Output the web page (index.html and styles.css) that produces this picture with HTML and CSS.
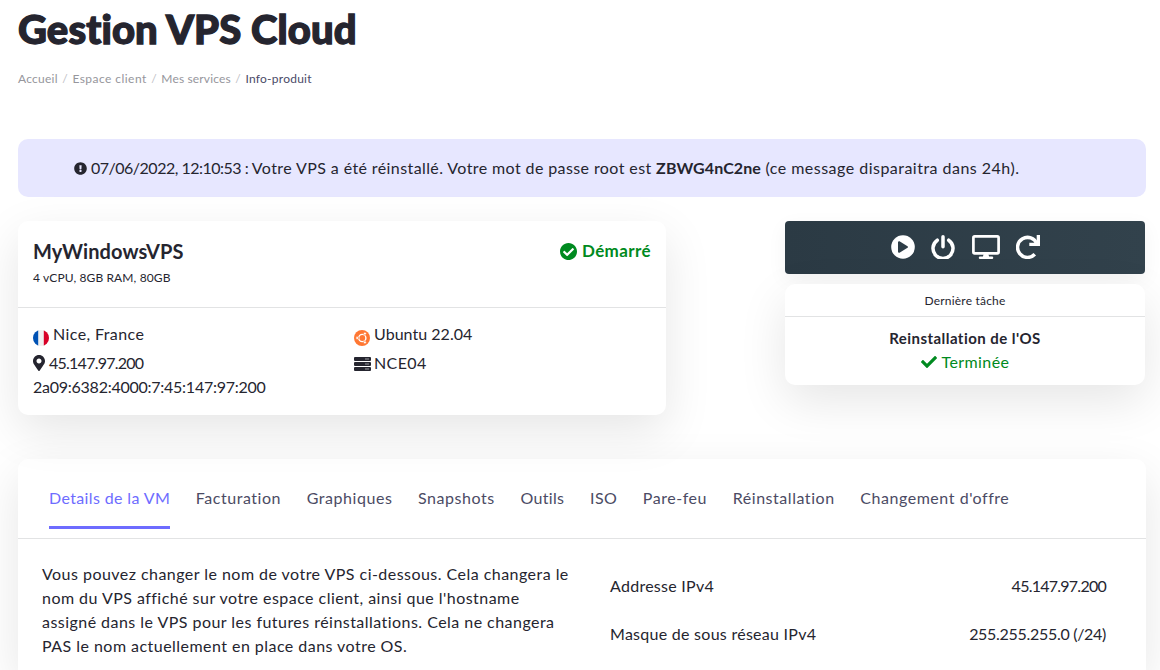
FILE: index.html
```html
<!DOCTYPE html>
<html lang="fr">
<head>
    <meta charset="UTF-8">
    <meta name="viewport" content="width=device-width, initial-scale=1.0">
    <title>Gestion VPS Cloud</title>
    <link rel="stylesheet" href="styles.css">
</head>
<body>
    <div class="container">
        <h1>Gestion VPS Cloud</h1>
        <nav class="breadcrumb">
            <a class="home">Accueil</a><i>/</i><a class="space">Espace client</a><i>/</i><a>Mes services</a><i>/</i><span class="current">Info-produit</span>
        </nav>

        <div class="alert">
            <svg class="icon-alert" viewBox="0 0 512 512"><path fill-rule="evenodd" d="M504 256c0 137-111 248-248 248S8 393 8 256C8 119 119 8 256 8s248 111 248 248zm-248 50c-25.400 0-46 20.600-46 46s20.600 46 46 46 46-20.600 46-46-20.600-46-46-46zm-43.700-165.300l7.400 136c.4 6.300 5.600 11.300 12 11.300h48.600c6.400 0 11.600-5 12-11.300l7.400-136c.4-6.900-5.100-12.700-12-12.700h-63.400c-6.900 0-12.400 5.800-12 12.700z"/></svg>
            <div><span class="date">07/06/2022, 12:10:53 : </span>Votre VPS a été réinstallé. Votre mot de passe root est <b>ZBWG4nC2ne</b> <span class="note">(ce message disparaitra dans 24h).</span></div>
        </div>

        <div class="summary">
            <div class="card vps">
                <div class="vps-header">
                    <div>
                        <h2>MyWindowsVPS</h2>
                        <div class="specs">4 vCPU, 8GB RAM, 80GB</div>
                    </div>
                    <div class="status">
                        <svg class="icon-status" viewBox="8 8 496 496"><path fill-rule="evenodd" d="M504 256c0 137-111 248-248 248S8 393 8 256 119 8 256 8s248 111 248 248zM227.300 387.300l184-184c6.200-6.200 6.200-16.400 0-22.600l-22.600-22.600c-6.200-6.200-16.400-6.200-22.600 0L216 308.100l-70.100-70c-6.200-6.200-16.400-6.200-22.600 0l-22.600 22.600c-6.200 6.200-6.200 16.400 0 22.600l104 104c6.200 6.200 16.400 6.200 22.600 0z"/></svg>
                        <span>Démarré</span>
                    </div>
                </div>
                <div class="vps-body">
                    <div>
                        <div class="line first">
                            <svg class="icon-round" viewBox="0 0 16 16"><clipPath id="round"><circle cx="8" cy="8" r="8"/></clipPath><g clip-path="url(#round)"><path fill="#f0f0f0" d="M0 0h16v16H0z"/><path fill="#0052b4" d="M0 0h5.200v16H0z"/><path fill="#d80027" d="M10.800 0H16v16h-5.200z"/></g></svg>
                            <span>Nice, France</span>
                        </div>
                        <div class="line">
                            <svg class="icon-pin" viewBox="0 0 384 512"><path fill-rule="evenodd" d="M172.300 501.700C27 291 0 269.400 0 192 0 86 86 0 192 0s192 86 192 192c0 77.400-27 99-172.300 309.700-9.500 13.800-29.900 13.800-39.400 0zM192 272c44.200 0 80-35.800 80-80s-35.800-80-80-80-80 35.800-80 80 35.800 80 80 80z"/></svg>
                            <span class="ip">45.147.97.200</span>
                        </div>
                        <div class="line ipv6">2a09:6382:4000:7:45:147:97:200</div>
                    </div>
                    <div>
                        <div class="line first">
                            <svg class="icon-round" viewBox="0 0 16 16"><circle cx="8" cy="8" r="8" fill="#f73"/><circle cx="8.300" cy="8" r="3.600" fill="none" stroke="#fff" stroke-width="1.400"/><g fill="#fff" stroke="#f73" stroke-width=".6"><circle cx="3.200" cy="8" r="1.400"/><circle cx="10.900" cy="3.600" r="1.400"/><circle cx="10.900" cy="12.400" r="1.400"/></g></svg>
                            <span class="os">Ubuntu 22.04</span>
                        </div>
                        <div class="line">
                            <svg class="icon-server" viewBox="0 0 17 14"><rect width="17" height="4" rx="1"/><rect y="5" width="17" height="4" rx="1"/><rect y="10" width="17" height="4" rx="1"/><path fill="#9a9aa0" d="M11 1.500h4v1h-4zM11 6.500h4v1h-4zM11 11.500h4v1h-4z"/></svg>
                            <span>NCE04</span>
                        </div>
                    </div>
                </div>
            </div>

            <div class="side">
                <div class="actions">
                    <svg width="24" height="24" viewBox="0 0 24 24"><circle cx="12" cy="12" r="11.800" fill="#fff"/><path d="M8 7.200v9.600l8-4.800z" fill="#2e3d47" stroke="#2e3d47" stroke-width="2" stroke-linejoin="round"/></svg>
                    <svg width="24" height="24" viewBox="0 0 24 24"><path d="M6.300 5.200a10 10 0 1 0 11.400 0M12 1.800v10" fill="none" stroke="#fff" stroke-width="3.500" stroke-linecap="round"/></svg>
                    <svg width="28" height="24" viewBox="0 0 28 24"><rect x="1.400" y="1.400" width="25.200" height="17" rx="1.300" fill="none" stroke="#fff" stroke-width="2.700"/><path d="M11.700 19h4.600l.8 2.500H20a1.200 1.200 0 0 1 0 2.500H8a1.200 1.200 0 0 1 0-2.500h2.900z" fill="#fff"/></svg>
                    <svg width="24" height="24" viewBox="0 0 24 24"><path d="M18.800 19.300A10 10 0 1 1 20.800 8.600" fill="none" stroke="#fff" stroke-width="3.500"/><path d="M20.700 0H24v11H13.300V7.700h7.400z" fill="#fff"/></svg>
                </div>
                <div class="card task">
                    <div class="task-title">Dernière tâche</div>
                    <div class="task-body">
                        <b>Reinstallation de l'OS</b>
                        <div class="done">
                            <svg class="icon-check" viewBox="0 65 512 382"><path d="M173.900 439.400L7.500 273c-10-10-10-26.200 0-36.200l36.200-36.200c10-10 26.200-10 36.200 0L192 312.700 432.100 72.600c10-10 26.200-10 36.200 0l36.200 36.200c10 10 10 26.200 0 36.200L210.100 439.400c-10 10-26.200 10-36.200 0z"/></svg>
                            <span>Terminée</span>
                        </div>
                    </div>
                </div>
            </div>
        </div>

        <div class="card details">
            <nav class="tabs">
                <a class="tab active">Details de la VM</a>
                <a class="tab">Facturation</a>
                <a class="tab">Graphiques</a>
                <a class="tab">Snapshots</a>
                <a class="tab short">Outils</a>
                <a class="tab short">ISO</a>
                <a class="tab">Pare-feu</a>
                <a class="tab">Réinstallation</a>
                <a class="tab">Changement d'offre</a>
            </nav>
            <div class="details-body">
                <p>Vous pouvez changer le nom de votre VPS ci-dessous. Cela changera le<br>
                nom du VPS affiché sur votre espace client, ainsi que l'hostname<br>
                assigné dans le VPS pour les futures réinstallations. Cela ne changera<br>
                PAS le nom actuellement en place dans votre OS.</p>
                <dl>
                    <div><dt>Addresse IPv4</dt><dd class="ip">45.147.97.200</dd></div>
                    <div><dt>Masque de sous réseau IPv4</dt><dd class="mask">255.255.255.0 (/24)</dd></div>
                </dl>
            </div>
        </div>
    </div>
</body>
</html>
```
FILE: styles.css
```css
* {
    box-sizing: border-box;
}
body {
    margin: 0;
    background-color: #fff;
    color: #25252f;
    font-family: Lato, sans-serif;
    font-size: 16px;
    line-height: 24px;
    letter-spacing: 0.4px;
}
svg {
    flex: none;
    fill: currentColor;
}
h1, h2, p, dl, dd {
    margin: 0;
}
.container {
    width: 1128px;
    margin-left: 18px;
}
h1 {
    padding-top: 5px;
    font-size: 40px;
    line-height: 48px;
    font-weight: 900;
    letter-spacing: 0.1px;
    white-space: nowrap;
    -webkit-text-stroke: 1.3px #25252f;
}
.breadcrumb {
    display: flex;
    margin-top: 16px;
    font-size: 12px;
    line-height: 20px;
    letter-spacing: 0.15px;
    color: #96969c;
}
.breadcrumb .home {
    letter-spacing: 0.25px;
}
.breadcrumb .space {
    letter-spacing: 0.45px;
}
.breadcrumb i {
    width: 14.600px;
    text-align: center;
    font-style: normal;
    color: #c0c0c6;
}
.breadcrumb .current {
    letter-spacing: 0.25px;
    color: #4a4a68;
}
.alert {
    display: flex;
    align-items: center;
    height: 58px;
    margin-top: 50px;
    padding-left: 56px;
    border-radius: 10px;
    background-color: #e7e7ff;
    white-space: nowrap;
}
.icon-alert {
    width: 13px;
    height: 13px;
    margin-right: 4px;
}
.alert .date {
    letter-spacing: -0.5px;
}
.alert b {
    letter-spacing: 0.1px;
}
.alert .note {
    letter-spacing: 0.48px;
}
.card {
    background-color: #fff;
    border-radius: 10px;
    box-shadow: 0 16px 48px rgba(0, 0, 0, 0.1);
}
.summary {
    display: flex;
    justify-content: space-between;
    align-items: flex-start;
    margin-top: 24px;
    padding-right: 1px;
}
.vps {
    width: 648px;
    height: 194px;
}
.vps-header {
    display: flex;
    justify-content: space-between;
    height: 87px;
    padding: 18px 15px 0;
    border-bottom: 1px solid #e2e3e4;
}
h2 {
    font-size: 20px;
    line-height: 24px;
    font-weight: 700;
    letter-spacing: 0.08px;
}
.specs {
    margin-top: 5px;
    font-size: 12px;
    line-height: 20px;
    letter-spacing: 0.12px;
}
.status {
    display: flex;
    align-items: center;
    height: 24px;
    font-size: 17px;
    font-weight: 700;
    color: #008a20;
}
.icon-status {
    width: 17px;
    height: 17px;
    margin-right: 5px;
}
.vps-body {
    display: grid;
    grid-template-columns: 321px 1fr;
    padding: 14px 15px 0;
}
.line {
    display: flex;
    align-items: center;
    height: 24px;
    white-space: nowrap;
}
.line.first {
    margin-bottom: 5px;
}
.icon-round {
    width: 16px;
    height: 16px;
    margin: 8px 4px 0 0;
}
.icon-pin {
    width: 12px;
    height: 16px;
    margin-right: 4px;
}
.icon-server {
    width: 17px;
    height: 14px;
    margin: 1px 3px 0 0;
}
.ip {
    letter-spacing: -0.75px;
}
.ipv6 {
    letter-spacing: -0.25px;
}
.os {
    letter-spacing: 0.03px;
}
.side {
    width: 360px;
}
.actions {
    display: flex;
    justify-content: center;
    align-items: center;
    gap: 16.500px;
    height: 53px;
    padding: 0 0 2px 1px;
    border-radius: 4px;
    background: linear-gradient(90deg, #2b3a44, #32424c);
    box-shadow: 0 6px 20px rgba(0, 0, 0, 0.05);
}
.task {
    height: 101px;
    margin-top: 10px;
    text-align: center;
}
.task-title {
    height: 33px;
    border-bottom: 1px solid #e2e3e4;
    font-size: 12px;
    line-height: 34px;
    letter-spacing: 0.2px;
}
.task-body {
    padding-top: 9px;
}
.task-body b {
    display: block;
    font-size: 15px;
    letter-spacing: 0.45px;
}
.done {
    display: flex;
    justify-content: center;
    align-items: center;
    color: #008a20;
}
.icon-check {
    width: 16px;
    height: 12px;
    margin-right: 5px;
}
.details {
    height: 211px;
    margin-top: 44px;
    border-radius: 10px 10px 0 0;
}
.tabs {
    display: flex;
    gap: 25.700px;
    height: 80px;
    padding: 27px 31px 0;
    border-bottom: 1px solid #e2e3e4;
    white-space: nowrap;
}
.tab {
    height: 43px;
    letter-spacing: 0.54px;
    color: #4b4b64;
}
.tab.short {
    letter-spacing: 0.35px;
}
.tab.active {
    letter-spacing: 0.37px;
    color: #6e6cff;
    border-bottom: 3px solid #6e6cff;
}
.details-body {
    display: grid;
    grid-template-columns: 568px 496px;
    padding: 23px 24px 0;
    white-space: nowrap;
}
.details-body p {
    letter-spacing: 0.46px;
}
dl > div {
    display: flex;
    justify-content: space-between;
    padding: 12px 0;
    letter-spacing: 0.27px;
}
.mask {
    letter-spacing: -0.3px;
}
```
